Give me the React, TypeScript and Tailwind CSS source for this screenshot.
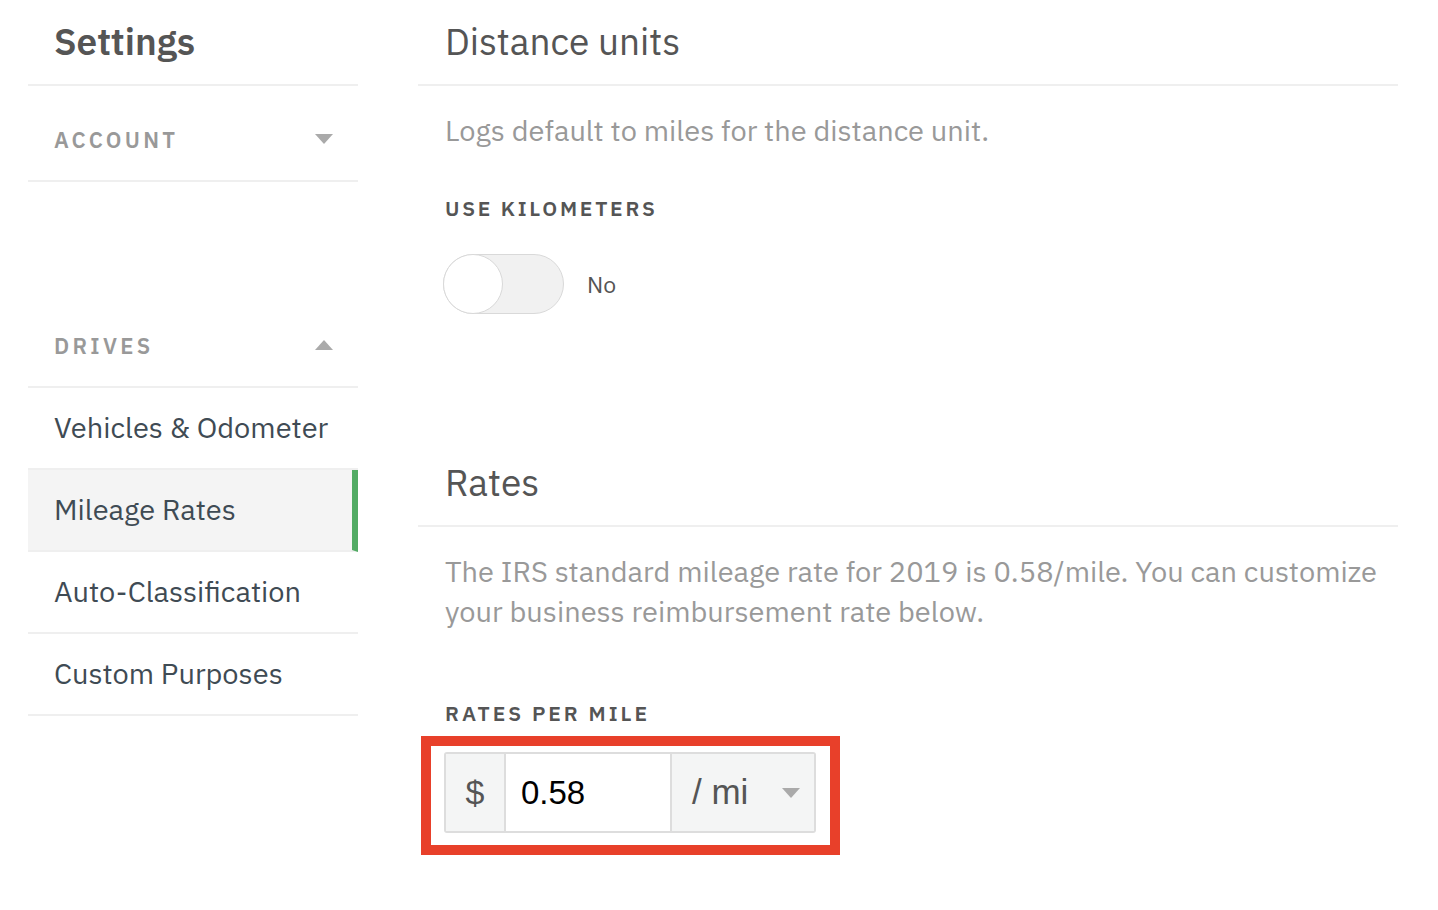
import { useState } from "react";

const font = { fontFamily: '"IBM Plex Sans", Inter, "Noto Sans", sans-serif' };
const arial = { fontFamily: '"Liberation Sans", Arial, sans-serif' };

function Caret({ up = false }: { up?: boolean }) {
  return (
    <svg width="18" height="10" viewBox="0 0 18 10" className="shrink-0">
      {up ? <path d="M9 0 L18 10 L0 10 Z" fill="#aaaaaa" /> : <path d="M0 0 L18 0 L9 10 Z" fill="#aaaaaa" />}
    </svg>
  );
}

const driveItems = ["Vehicles & Odometer", "Mileage Rates", "Auto-Classification", "Custom Purposes"];

export default function App() {
  const [useKm, setUseKm] = useState(false);
  const [rate, setRate] = useState("0.58");

  return (
    <div className="min-h-screen w-full bg-white flex text-[#555]" style={font}>
      {/* Sidebar */}
      <aside className="ml-[28px] w-[330px] shrink-0">
        <div className="h-[86px] flex items-center pl-[26px] border-b-2 border-[#efefef]">
          <h1 className="text-[37px] font-semibold text-[#555] leading-none pb-[2px]">Settings</h1>
        </div>
        <div className="h-[96px] flex items-center justify-between pl-[26px] pr-[25px] pt-[12px] border-b-2 border-[#efefef]">
          <span className="text-[22px] font-semibold tracking-[0.15em] text-[#999]">ACCOUNT</span>
          <Caret />
        </div>
        <div className="h-[110px]" />
        <div className="h-[96px] flex items-center justify-between pl-[26px] pr-[25px] pt-[12px] border-b-2 border-[#efefef]">
          <span className="text-[22px] font-semibold tracking-[0.15em] text-[#999]">DRIVES</span>
          <Caret up />
        </div>
        {driveItems.map((item) => {
          const active = item === "Mileage Rates";
          return (
            <div
              key={item}
              className={`h-[82px] flex items-center pl-[26px] border-b-2 border-[#efefef] text-[29px] text-[#3f4b54] ${
                active ? "bg-[#f4f4f4] border-r-[6px] border-r-[#52ab64]" : ""
              }`}
            >
              {item}
            </div>
          );
        })}
      </aside>

      {/* Main */}
      <main className="ml-[60px] w-[980px] shrink-0">
        <div className="h-[86px] flex items-center pl-[27px] border-b-2 border-[#efefef]">
          <h2 className="text-[37px] text-[#555] leading-none pb-[2px]">Distance units</h2>
        </div>
        <p className="mt-[24px] pl-[27px] text-[29px] leading-[40px] text-[#999]">
          Logs default to miles for the distance unit.
        </p>
        <div className="mt-[46px] pl-[27px] text-[21px] leading-[24px] font-semibold tracking-[0.13em] text-[#555]">
          USE KILOMETERS
        </div>
        <div className="mt-[34px] pl-[25px] flex items-center gap-[23px]">
          <button
            onClick={() => setUseKm(!useKm)}
            className={`relative h-[60px] w-[121px] rounded-full border border-[#d9d9d9] ${useKm ? "bg-[#52ab64]" : "bg-[#f1f1f1]"}`}
          >
            <span
              className={`absolute top-[-1px] h-[60px] w-[60px] rounded-full bg-white border border-[#d9d9d9] ${
                useKm ? "right-[-1px]" : "left-[-1px]"
              }`}
            />
          </button>
          <span className="text-[23px] text-[#555]">{useKm ? "Yes" : "No"}</span>
        </div>

        <div className="mt-[127px] h-[86px] flex items-center pl-[27px] border-b-2 border-[#efefef]">
          <h2 className="text-[37px] text-[#555] leading-none pb-[2px]">Rates</h2>
        </div>
        <p className="mt-[24px] pl-[27px] pr-[10px] text-[29px] leading-[40px] text-[#999]">
          The IRS standard mileage rate for 2019 is 0.58/mile. You can customize your business reimbursement rate below.
        </p>
        <div className="mt-[70px] pl-[27px] text-[21px] leading-[24px] font-semibold tracking-[0.14em] text-[#555]">
          RATES PER MILE
        </div>
        <div className="mt-[11px] ml-[3px] inline-block border-[10px] border-[#e8402a] pt-[6px] pb-[12px] pl-[13px] pr-[14px]">
          <div className="flex h-[81px] w-[372px] border-2 border-[#dddddd] rounded-[3px] overflow-hidden">
            <div className="w-[60px] flex items-center justify-center bg-[#f4f5f5] border-r-2 border-[#dddddd] text-[34px] text-[#555]" style={arial}>
              $
            </div>
            <input
              value={rate}
              onChange={(e) => setRate(e.target.value)}
              className="w-[164px] pl-[15px] text-[33px] text-black outline-none bg-white"
              style={arial}
            />
            <div className="flex-1 flex items-center justify-between bg-[#f4f5f5] border-l-2 border-[#dddddd] pl-[20px] pr-[14px] text-[35px] text-[#555]" style={arial}>
              <span>/ mi</span>
              <Caret />
            </div>
          </div>
        </div>
      </main>
    </div>
  );
}
